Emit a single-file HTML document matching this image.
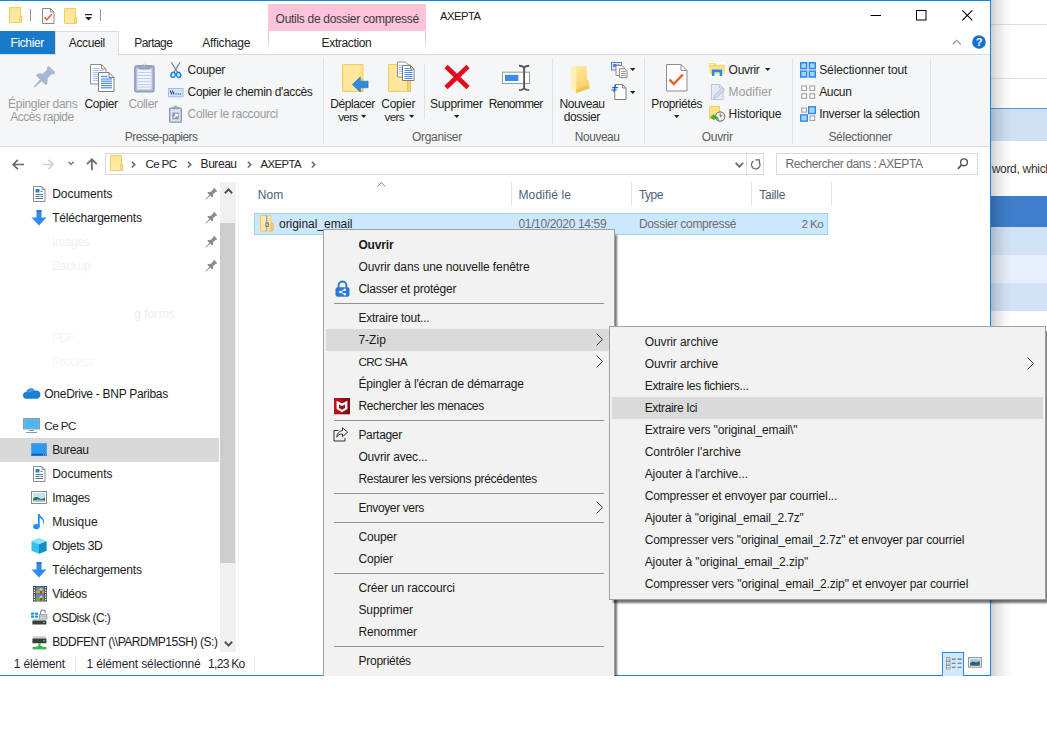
<!DOCTYPE html>
<html><head><meta charset="utf-8"><title>AXEPTA</title>
<style>
html,body{margin:0;padding:0;background:#fff;}
body{width:1047px;height:752px;position:relative;overflow:hidden;font-family:"Liberation Sans",sans-serif;font-size:12px;}
.a{position:absolute;}
.t{position:absolute;white-space:pre;line-height:16px;font-family:"Liberation Sans",sans-serif;}
svg{position:absolute;overflow:visible;}
.gs{position:absolute;top:58px;height:86px;width:1px;background:#e2e3e4;}
.cs{position:absolute;top:182px;height:24px;width:1px;background:#e5e5e5;}
.ms{position:absolute;height:1px;background:#919191;}
.hl{position:absolute;background:#dadada;}

</style></head>
<body>
<!-- right-hand background app -->
<div class="a" style="left:990px;top:0;width:57px;height:676px;background:#fff;"></div>
<div class="a" style="left:991px;top:24px;width:56px;height:1px;background:#e1e1e1;"></div>
<div class="a" style="left:991px;top:78px;width:56px;height:1px;background:#e1e1e1;"></div>
<div class="a" style="left:991px;top:108px;width:56px;height:33px;background:#cfe0f4;border-top:1px solid #5b9bd5;box-sizing:border-box;"></div>
<div class="a" style="left:991px;top:196px;width:56px;height:31px;background:#3d7fcb;"></div>
<div class="a" style="left:991px;top:227px;width:56px;height:28px;background:#d3e2f6;"></div>
<div class="a" style="left:991px;top:255px;width:56px;height:28px;background:#e7f0fb;"></div>
<div class="a" style="left:991px;top:283px;width:56px;height:28px;background:#d3e2f6;"></div>
<div class="a" style="left:991px;top:0;width:22px;height:676px;background:linear-gradient(90deg,rgba(0,0,0,.2),rgba(0,0,0,.1) 30%,rgba(0,0,0,.03) 65%,rgba(0,0,0,0));"></div>

<!-- explorer window -->
<div class="a" style="left:0;top:0;width:991px;height:676px;background:#fff;box-sizing:border-box;border-top:1px solid #1883d7;border-right:1px solid #1883d7;border-bottom:1px solid #1883d7;"></div>
<!-- title bar -->
<div class="a" style="left:268px;top:4px;width:158px;height:27px;background:#fcc3da;"></div>
<div class="a" style="left:268px;top:31px;width:1px;height:19px;background:linear-gradient(#c4c4c4,#dcdcdc 60%,rgba(230,230,230,0));"></div><div class="a" style="left:425px;top:31px;width:1px;height:19px;background:linear-gradient(#c4c4c4,#dcdcdc 60%,rgba(230,230,230,0));"></div>
<div class="a" style="left:30px;top:9px;width:1px;height:12px;background:#959595;"></div>
<div class="a" style="left:100px;top:9px;width:1px;height:12px;background:#959595;"></div>
<svg style="left:9px;top:7px" width="14" height="16" viewBox="0 0 14 16"><defs><linearGradient id="fsg10" x1="0" y1="0" x2="0" y2="1"><stop offset="0" stop-color="#ffe493"/><stop offset="1" stop-color="#ffecaa"/></linearGradient></defs><path d="M0.500 0.500h11v15h-11z" fill="url(#fsg10)" stroke="#f3cf62"/><path d="M10.700 9.500h2v6h-2z" fill="#ffe89c" stroke="#eec759"/></svg>
<svg style="left:42px;top:8px" width="13" height="16" viewBox="0 0 13 16"><path d="M0.500 0.500h8l3.500 3.500v11.500h-11.500z" fill="#f8f9fb" stroke="#8a8a8a"/><path d="M8.500 0.500v3.500h3.500" fill="none" stroke="#8a8a8a"/><path d="M2.500 9.300l2.300 2.400l5-5.400" fill="none" stroke="#f15a22" stroke-width="1.500"/></svg>
<svg style="left:64px;top:8px" width="14" height="16" viewBox="0 0 14 16"><defs><linearGradient id="fsg11" x1="0" y1="0" x2="0" y2="1"><stop offset="0" stop-color="#ffe493"/><stop offset="1" stop-color="#ffecaa"/></linearGradient></defs><path d="M0.500 0.500h11v15h-11z" fill="url(#fsg11)" stroke="#f3cf62"/><path d="M10.700 9.500h2v6h-2z" fill="#ffe89c" stroke="#eec759"/></svg>
<svg style="left:85px;top:13.6px" width="8" height="8" viewBox="0 0 8 8"><rect x="0" y="0" width="7" height="1.2" fill="#222"/><path d="M0 3h7l-3.5 3.5z" fill="#222"/></svg>
<svg style="left:870px;top:10px" width="12" height="12" viewBox="0 0 12 12"><path d="M0.5 5.5h10.5" stroke="#000" stroke-width="1" fill="none"/></svg><svg style="left:916px;top:10px" width="12" height="12" viewBox="0 0 12 12"><rect x="0.5" y="0.5" width="9.5" height="9.5" stroke="#000" stroke-width="1" fill="none"/></svg><svg style="left:962px;top:10px" width="12" height="12" viewBox="0 0 12 12"><path d="M0.3 0.3l10 10M10.3 0.3l-10 10" stroke="#000" stroke-width="1.1" fill="none"/></svg><svg style="left:952px;top:38px" width="10" height="8" viewBox="0 0 10 8"><path d="M0.7 6.3l4-4l4 4" stroke="#9a9a9a" stroke-width="1.3" fill="none"/></svg><svg style="left:972px;top:35px" width="14" height="14" viewBox="0 0 14 14"><circle cx="7" cy="7" r="6.8" fill="#1272cf"/><text x="7" y="11" font-family="Liberation Sans" font-weight="bold" font-size="11" fill="#fff" text-anchor="middle">?</text></svg>
<!-- ribbon tabs -->
<div class="a" style="left:0;top:31px;width:55px;height:23px;background:#1979ca;"></div>
<div class="a" style="left:0;top:54px;width:990px;height:93px;background:#f5f6f7;border-top:1px solid #dadbdc;border-bottom:1px solid #dadbdc;box-sizing:border-box;"></div>
<div class="a" style="left:55px;top:31px;width:64px;height:24px;background:#f5f6f7;border:1px solid #dadbdc;border-bottom:none;box-sizing:border-box;"></div>
<!-- ribbon group separators -->
<div class="gs" style="left:323px;"></div>
<div class="gs" style="left:552px;"></div>
<div class="gs" style="left:644px;"></div>
<div class="gs" style="left:792px;"></div>
<div class="gs" style="left:930px;"></div>
<div class="a" style="left:424px;top:64px;width:1px;height:55px;background:#e2e3e4;"></div>
<!-- ribbon icons -->
<svg style="left:33px;top:67px" width="21" height="22" viewBox="0 0 21 22"><g transform="translate(10.2,11) rotate(45) translate(0,-12.5)" fill="#a7b7cf"><rect x="-4.800" y="0" width="9.600" height="3.400" rx="1"/><rect x="-3.300" y="2.500" width="6.600" height="7.500"/><path d="M-3.300 9.500l-3.600 4v2.200h13.800v-2.200l-3.600-4z"/><path d="M-1.200 15.500h2.400l-0.600 9.800h-1.200z"/></g></svg>
<svg style="left:90px;top:63px" width="26" height="30" viewBox="0 0 26 30"><path d="M0.5 1.5h11l4.5 4.5v15h-15.5z" fill="#fff" stroke="#8c8c8c"/><path d="M11.5 1.5v4.5h4.5" fill="none" stroke="#8c8c8c"/><path d="M2.5 5.5H9.5" stroke="#a9c6f5" stroke-width="1"/><path d="M2.5 7.5H13.5" stroke="#a9c6f5" stroke-width="1"/><path d="M2.5 9.5H13.5" stroke="#a9c6f5" stroke-width="1"/><path d="M2.5 11.5H13.5" stroke="#a9c6f5" stroke-width="1"/><path d="M2.5 13.5H13.5" stroke="#a9c6f5" stroke-width="1"/><path d="M2.5 15.5H13.5" stroke="#a9c6f5" stroke-width="1"/><path d="M2.5 17.5H13.5" stroke="#a9c6f5" stroke-width="1"/><path d="M8.5 9.5h10.5l5 5v14h-15.5z" fill="#fff" stroke="#7e7e7e"/><path d="M19 9.5v5h5" fill="none" stroke="#7e7e7e"/><path d="M11 13.5H17.5" stroke="#4a8af0" stroke-width="1.2"/><path d="M11 16H22" stroke="#4a8af0" stroke-width="1.2"/><path d="M11 18.2H22" stroke="#4a8af0" stroke-width="1.2"/><path d="M11 20.4H22" stroke="#4a8af0" stroke-width="1.2"/><path d="M11 22.6H22" stroke="#4a8af0" stroke-width="1.2"/><path d="M11 24.8H22" stroke="#4a8af0" stroke-width="1.2"/></svg>
<svg style="left:134px;top:62px" width="21" height="31" viewBox="0 0 21 31"><rect x="0.800" y="4" width="19.200" height="25.800" rx="1.500" fill="#a9b7d1" stroke="#8797b8" stroke-width="1.300"/><rect x="3" y="7" width="14.800" height="20.600" fill="#eef2fa" stroke="#c2cce0" stroke-width="0.800"/><path d="M3.5 10.5H17.3" stroke="#c3cee4" stroke-width="1"/><path d="M3.5 13.5H17.3" stroke="#c3cee4" stroke-width="1"/><path d="M3.5 16.5H17.3" stroke="#c3cee4" stroke-width="1"/><path d="M3.5 19.5H17.3" stroke="#c3cee4" stroke-width="1"/><path d="M3.5 22.5H17.3" stroke="#c3cee4" stroke-width="1"/><path d="M3.5 25H17.3" stroke="#c3cee4" stroke-width="1"/><path d="M5.600 7v-3.300h2.900a2 2.200 0 0 1 3.800 0h2.900v3.300z" fill="#9aa9c6" stroke="#8797b8" stroke-width="0.800"/><circle cx="10.400" cy="2.600" r="0.900" fill="#eef2fa"/></svg>
<svg style="left:170px;top:62px" width="13" height="17" viewBox="0 0 13 17"><path d="M1.3 0.3l6.6 10.6M10.1 0.3l-6.6 10.6" stroke="#7c838b" stroke-width="1.2" fill="none"/><ellipse cx="3.1" cy="12.9" rx="2.1" ry="2.5" transform="rotate(25 3.1 12.9)" fill="#eaf4fd" stroke="#1b84d8" stroke-width="1.5"/><ellipse cx="8.6" cy="12.9" rx="2.1" ry="2.5" transform="rotate(-25 8.6 12.9)" fill="#eaf4fd" stroke="#1b84d8" stroke-width="1.5"/></svg>
<svg style="left:168px;top:88px" width="16" height="10" viewBox="0 0 16 10"><rect x="0.5" y="0.5" width="14.5" height="8.3" fill="#cfe4fc" stroke="#9cc3f0"/><path d="M2.2 2.6l1.6 3.8M4.4 2.6l1.6 3.8" stroke="#1c2f55" stroke-width="1.1" fill="none"/><path d="M7.4 6h1.2M9.6 6h1.2M11.8 6h1.2" stroke="#1c2f55" stroke-width="1.2"/></svg>
<svg style="left:169px;top:106px" width="13" height="17" viewBox="0 0 13 17"><rect x="0.7" y="2.2" width="11.6" height="14" rx="1" fill="#dfe4ee" stroke="#8493ae" stroke-width="1.3"/><path d="M3.7 2.8v-1.6h1.6a1.2 1.2 0 0 1 2.4 0h1.6v1.6z" fill="#aab4c8" stroke="#8493ae" stroke-width="0.7"/><rect x="3.3" y="6.5" width="6.4" height="6.8" fill="#8b98b3"/><path d="M4.6 12l3.3-3.3M5.7 8.2h2.6v2.6" stroke="#fff" stroke-width="1.1" fill="none"/></svg>
<svg style="left:342px;top:64px" width="27" height="29" viewBox="0 0 27 29"><path d="M0.5 0.5h20.5v27h-20.5z" fill="#ffe28a" stroke="#f0cf6a"/><path d="M2 2h15.5v24h-15.5z" fill="#ffe9a6" opacity="0.7"/><path d="M18 15h3v12.5h-3z" fill="#f3d273" stroke="#e3bd55" stroke-width="0.7"/><path d="M10.3 20.5l8-7.6v4.3h7.8v6.6h-7.8v4.3z" fill="#2f8ae0" stroke="#1c6fc4" stroke-width="0.6"/></svg>
<svg style="left:388px;top:61px" width="27" height="32" viewBox="0 0 27 32"><path d="M0.5 3.5h22v27h-22z" fill="#ffe28a" stroke="#f0cf6a"/><path d="M2 5h16.5v24h-16.5z" fill="#ffe9a6" opacity="0.7"/><path d="M19.5 18h3v12.5h-3z" fill="#f3d273" stroke="#e3bd55" stroke-width="0.7"/><path d="M9.5 1h8l3.5 3.5v11.5h-11.5z" fill="#fff" stroke="#8c8c8c"/><path d="M11 4.5H15" stroke="#9cbcf0" stroke-width="1"/><path d="M11 6.5H15" stroke="#9cbcf0" stroke-width="1"/><path d="M11 8.5H15" stroke="#9cbcf0" stroke-width="1"/><path d="M11 10.5H15" stroke="#9cbcf0" stroke-width="1"/><path d="M11 12.5H15" stroke="#9cbcf0" stroke-width="1"/><path d="M14.5 4.5h8l3.5 3.5v11.5h-11.5z" fill="#fff" stroke="#7e7e7e"/><path d="M22.5 4.5v3.5h3.5" fill="none" stroke="#7e7e7e"/><path d="M16.5 7.5H21.5" stroke="#4a8af0" stroke-width="1"/><path d="M16.5 9.5H24.5" stroke="#4a8af0" stroke-width="1"/><path d="M16.5 11.5H24.5" stroke="#4a8af0" stroke-width="1"/><path d="M16.5 13.5H24.5" stroke="#4a8af0" stroke-width="1"/><path d="M16.5 15.5H24.5" stroke="#4a8af0" stroke-width="1"/><path d="M16.5 17.5H24.5" stroke="#4a8af0" stroke-width="1"/></svg>
<svg style="left:444px;top:65px" width="26" height="25" viewBox="0 0 26 25"><path d="M2 1.5l22 21M24 1.5l-22 21" stroke="#e00b1c" stroke-width="4.7" fill="none"/></svg>
<svg style="left:502px;top:64px" width="28" height="27" viewBox="0 0 28 27"><rect x="0.5" y="8.2" width="27" height="11.3" fill="#fff" stroke="#9a9a9a"/><rect x="3" y="10.8" width="13.4" height="6.2" fill="#3b8ee6"/><rect x="17.8" y="1" width="8" height="25.5" fill="#f5f6f7" opacity="0.0"/><path d="M17 1.7c2.7 0 4.5 0.6 5.1 2.4c0.6-1.8 2.4-2.4 5.1-2.4M17 26.1c2.7 0 4.5-0.6 5.1-2.4c0.6 1.8 2.4 2.4 5.1 2.4M22.1 4v20" stroke="#595959" stroke-width="1.9" fill="none"/></svg>
<svg style="left:570px;top:65px" width="20" height="29" viewBox="0 0 20 29"><defs><linearGradient id="nfg" x1="0" y1="0" x2="0.3" y2="1"><stop offset="0" stop-color="#ffe9a2"/><stop offset="1" stop-color="#f8cf60"/></linearGradient></defs><path d="M0.6 2.4l5.6-1.3v26.8l-5.2-2.8z" fill="#ffefb8"/><path d="M6.2 1.1h10.6v12.7l2.4 3.2v6.4l-13 4.5z" fill="url(#nfg)"/><path d="M6.2 24.5l13-4.2v3.1l-13 4.5z" fill="#eabf4e" opacity="0.8"/></svg>
<svg style="left:611px;top:62px" width="17" height="17" viewBox="0 0 17 17"><rect x="0.5" y="0.5" width="10" height="7.5" fill="#dbe9fb" stroke="#4f86cf"/><rect x="2" y="2" width="3.5" height="3" fill="#4f86cf"/><path d="M6.5 3h2" stroke="#c0504d"/><path d="M5 3.5h6l2.2 2.2v7.8h-8.2z" fill="#fff" stroke="#7c7c7c" stroke-width="0.9"/><path d="M8.5 6.8h5.5l2 2v6.8h-7.5z" fill="#fff" stroke="#7c7c7c" stroke-width="0.9"/><path d="M10 9.6H15" stroke="#d07a6a" stroke-width="0.9"/><path d="M10 13.6H15" stroke="#d07a6a" stroke-width="0.9"/><path d="M10 11.6H15" stroke="#5d8fd1" stroke-width="0.9"/></svg>
<svg style="left:611px;top:84px" width="17" height="17" viewBox="0 0 17 17"><path d="M3.8 0.5h7.7l3.5 3.5v11.5h-11.2z" fill="#fff" stroke="#7c7c7c"/><path d="M11.5 0.5v3.5h3.5" fill="none" stroke="#7c7c7c"/><path d="M1.2 3.6h6M0.3 6h5.6" stroke="#1d64c8" stroke-width="1.1"/><path d="M4.6 1.2l-1.8 7" stroke="#1d64c8" stroke-width="1.1"/></svg>
<svg style="left:666px;top:64px" width="22" height="28" viewBox="0 0 22 28"><path d="M0.5 0.5h14.5l6 6v20.5h-20.5z" fill="#fff" stroke="#8c8c8c"/><path d="M15 0.5v6h6" fill="none" stroke="#8c8c8c"/><path d="M3.5 15.5l4.2 4.6l9.2-9.6" fill="none" stroke="#f15a22" stroke-width="2.4"/></svg>
<svg style="left:709px;top:62px" width="17" height="16" viewBox="0 0 17 16"><rect x="0" y="0" width="16.5" height="15.5" fill="#fff"/><path d="M0.3 1h5.8l1.6 1.8h8.3v8.8h-15.7z" fill="#ffd766"/><path d="M1.3 2.2h3.4" stroke="#fff" stroke-width="0.9"/><path d="M0.3 4.3h15.7v7.3h-15.7z" fill="#ffe08a"/><path d="M2.8 14v-6.6h10.4v6.6h-2.6v-3.8h-5.2v3.8z" fill="#1e90e8"/></svg>
<svg style="left:710px;top:84px" width="16" height="16" viewBox="0 0 16 16"><path d="M1.500 0.500h8l3.500 3.500v11.500h-11.500z" fill="#e4eaf6" stroke="#b9c4da"/><path d="M9.500 0.500v3.500h3.500" fill="none" stroke="#b9c4da"/><path d="M3.600 14.600l0.800-3.200l8.200-7.600l2 2.200l-8.200 7.600z" fill="#d3dcee" stroke="#b3bfd8" stroke-width="0.900"/></svg>
<svg style="left:709px;top:106px" width="17" height="16" viewBox="0 0 17 16"><path d="M0.5 0.5h10v12h-10z" fill="#ffe28a" stroke="#f0cf6a"/><path d="M9 6.5h1.5v6h-1.5z" fill="#f3d273"/><circle cx="11.2" cy="10.5" r="4.6" fill="#f1f1f1" stroke="#7a7a7a" stroke-width="1.1"/><path d="M11.2 7.6v3.1l2-1.5" stroke="#555" stroke-width="0.9" fill="none"/><path d="M1.6 11.2l3.6-3v1.9c2.4 0 3.9 1.2 4.3 3.8c-1-1.4-2.4-1.7-4.3-1.7v1.9z" fill="#3fb83a" stroke="#2a8a28" stroke-width="0.5"/></svg>
<svg style="left:800px;top:62px" width="16" height="16" viewBox="0 0 16 16"><rect x="0.75" y="0.75" width="5.90" height="5.90" fill="#a9d3f9" stroke="#2b8ae6" stroke-width="1.5"/><rect x="9.35" y="0.75" width="5.90" height="5.90" fill="#a9d3f9" stroke="#2b8ae6" stroke-width="1.5"/><rect x="0.75" y="9.15" width="5.90" height="5.90" fill="#a9d3f9" stroke="#2b8ae6" stroke-width="1.5"/><rect x="9.35" y="9.15" width="5.90" height="5.90" fill="#a9d3f9" stroke="#2b8ae6" stroke-width="1.5"/></svg>
<svg style="left:800px;top:85px" width="16" height="16" viewBox="0 0 16 16"><rect x="1.70" y="1.00" width="4.80" height="4.40" fill="#fdfdfd" stroke="#9a9a9a" stroke-width="1"/><rect x="9.90" y="1.00" width="4.80" height="4.40" fill="#fdfdfd" stroke="#9a9a9a" stroke-width="1"/><rect x="1.70" y="8.80" width="4.80" height="4.50" fill="#fdfdfd" stroke="#9a9a9a" stroke-width="1"/><rect x="9.90" y="8.80" width="4.80" height="4.50" fill="#fdfdfd" stroke="#9a9a9a" stroke-width="1"/></svg>
<svg style="left:800px;top:107px" width="16" height="16" viewBox="0 0 16 16"><rect x="1.70" y="1.10" width="4.80" height="4.00" fill="#fdfdfd" stroke="#9a9a9a" stroke-width="1"/><rect x="8.70" y="-0.20" width="6.60" height="6.70" fill="#a9d3f9" stroke="#2b8ae6" stroke-width="1.4"/><rect x="0.70" y="7.90" width="6.60" height="6.20" fill="#a9d3f9" stroke="#2b8ae6" stroke-width="1.4"/><rect x="9.90" y="8.90" width="4.80" height="4.50" fill="#fdfdfd" stroke="#9a9a9a" stroke-width="1"/></svg>
<svg style="left:360.5px;top:115px" width="6" height="4" viewBox="0 0 6 4"><path d="M0 0h5.4l-2.7 3z" fill="#222"/></svg><svg style="left:408.5px;top:115px" width="6" height="4" viewBox="0 0 6 4"><path d="M0 0h5.4l-2.7 3z" fill="#222"/></svg><svg style="left:453.5px;top:115px" width="6" height="4" viewBox="0 0 6 4"><path d="M0 0h5.4l-2.7 3z" fill="#222"/></svg><svg style="left:673.5px;top:115px" width="6" height="4" viewBox="0 0 6 4"><path d="M0 0h5.4l-2.7 3z" fill="#222"/></svg><svg style="left:765px;top:68px" width="6" height="4" viewBox="0 0 6 4"><path d="M0 0h5.4l-2.7 3z" fill="#222"/></svg><svg style="left:629.5px;top:68px" width="6" height="4" viewBox="0 0 6 4"><path d="M0 0h5.4l-2.7 3z" fill="#222"/></svg><svg style="left:629.5px;top:90.5px" width="6" height="4" viewBox="0 0 6 4"><path d="M0 0h5.4l-2.7 3z" fill="#222"/></svg>
<!-- address bar -->
<div class="a" style="left:105px;top:153px;width:659px;height:22px;border:1px solid #d9d9d9;box-sizing:border-box;background:#fff;"></div>
<div class="a" style="left:746px;top:154px;width:1px;height:20px;background:#d9d9d9;"></div>
<div class="a" style="left:776px;top:153px;width:202px;height:22px;border:1px solid #d9d9d9;box-sizing:border-box;background:#fff;"></div>
<svg style="left:12px;top:158.5px" width="13" height="11" viewBox="0 0 13 11"><path d="M12 5.500H1.300M5.800 0.900L1.200 5.500l4.600 4.600" stroke="#6a6a6a" stroke-width="1.700" fill="none"/></svg><svg style="left:42px;top:158.5px" width="13" height="11" viewBox="0 0 13 11"><path d="M0.300 5.500H11M6.500 0.900L11.100 5.500l-4.600 4.600" stroke="#d2d2d2" stroke-width="1.600" fill="none"/></svg><svg style="left:68px;top:161px" width="7" height="5" viewBox="0 0 7 5"><path d="M0.600 0.800l2.500 2.600l2.500-2.600" stroke="#777" stroke-width="1.400" fill="none"/></svg><svg style="left:86px;top:157.5px" width="12" height="13" viewBox="0 0 12 13"><path d="M5.900 12.300V1.400M1 6.200L5.900 1.300l4.900 4.900" stroke="#6a6a6a" stroke-width="1.700" fill="none"/></svg>
<svg style="left:110px;top:155px" width="14" height="16" viewBox="0 0 14 16"><defs><linearGradient id="fsg12" x1="0" y1="0" x2="0" y2="1"><stop offset="0" stop-color="#ffe493"/><stop offset="1" stop-color="#ffecaa"/></linearGradient></defs><path d="M0.500 0.500h11v15h-11z" fill="url(#fsg12)" stroke="#f3cf62"/><path d="M10.700 9.500h2v6h-2z" fill="#ffe89c" stroke="#eec759"/></svg>
<svg style="left:131px;top:161.29999999999998px" width="6" height="8" viewBox="0 0 6 8"><path d="M0.800 0.700l3 2.900l-3 2.900" stroke="#666" stroke-width="1.500" fill="none"/></svg><svg style="left:186.6px;top:161.29999999999998px" width="6" height="8" viewBox="0 0 6 8"><path d="M0.800 0.700l3 2.900l-3 2.900" stroke="#666" stroke-width="1.500" fill="none"/></svg><svg style="left:246.6px;top:161.29999999999998px" width="6" height="8" viewBox="0 0 6 8"><path d="M0.800 0.700l3 2.900l-3 2.900" stroke="#666" stroke-width="1.500" fill="none"/></svg><svg style="left:311.3px;top:161.29999999999998px" width="6" height="8" viewBox="0 0 6 8"><path d="M0.800 0.700l3 2.900l-3 2.900" stroke="#666" stroke-width="1.500" fill="none"/></svg>
<svg style="left:734.5px;top:162px" width="10" height="7" viewBox="0 0 10 7"><path d="M0.7 0.9l3.7 3.9l3.7-3.9" stroke="#6a6a6a" stroke-width="1.8" fill="none"/></svg><svg style="left:750px;top:157px" width="12" height="14" viewBox="0 0 12 14"><path d="M3.5 4.1A4.2 4.2 0 1 0 9.4 5.6" stroke="#707070" stroke-width="1.4" fill="none"/><path d="M5.2 2.9H9.4V6.6" stroke="#707070" stroke-width="1.4" fill="none"/></svg><svg style="left:957px;top:158px" width="12" height="12" viewBox="0 0 12 12"><circle cx="7" cy="4.3" r="3.4" stroke="#555" stroke-width="1.4" fill="none"/><path d="M4.6 6.8L0.8 10.8" stroke="#555" stroke-width="1.7"/></svg>
<!-- nav pane -->
<div class="a" style="left:0;top:438px;width:219px;height:24px;background:#d9d9d9;"></div>
<div class="a" style="left:220px;top:182px;width:16px;height:470px;background:#f0f0f0;"></div><div class="a" style="left:238px;top:182px;width:1px;height:470px;background:#f4f4f4;"></div>
<div class="a" style="left:220px;top:223px;width:15px;height:340px;background:#cdcdcd;"></div>
<svg style="left:223.5px;top:188px" width="9" height="6" viewBox="0 0 9 6"><path d="M0.900 5.200l3.600-3.800l3.600 3.800" stroke="#505050" stroke-width="2" fill="none"/></svg><svg style="left:223.5px;top:641px" width="9" height="6" viewBox="0 0 9 6"><path d="M0.900 0.800l3.600 3.800l3.600-3.800" stroke="#505050" stroke-width="2" fill="none"/></svg>
<svg style="left:33px;top:186px" width="13" height="16" viewBox="0 0 13 16"><path d="M0.5 0.5h8.5l3 3v12h-11.5z" fill="#fff" stroke="#8a8a8a"/><path d="M9 0.5v3h3" fill="none" stroke="#8a8a8a"/><rect x="2.5" y="3" width="4" height="3.5" fill="#2a7ad8"/><path d="M7.5 5.5h2M2.5 8.5h7.5M2.5 10.5h4M7.5 10.5h2.5M2.5 12.5h7.5" stroke="#4b6f9e" stroke-width="1"/><path d="M2.5 10.5h3" stroke="#3aa935" stroke-width="1"/></svg>
<svg style="left:31px;top:210px" width="16" height="16" viewBox="0 0 16 16"><path d="M5.5 0h5v7.5h5l-7.5 8l-7.5-8h5z" fill="#2b8be6"/><path d="M5.5 0h5v2h-5z" fill="#1d6fc8" opacity="0.6"/></svg>
<svg style="left:205px;top:189px" width="11" height="11" viewBox="0 0 11 11"><g transform="translate(5.6,5.4) rotate(45) translate(0,-7)" fill="#8a8a8a"><rect x="-2.3" y="0" width="4.6" height="1.6" rx="0.4"/><rect x="-1.6" y="1.2" width="3.2" height="4"/><path d="M-1.6 5l-1.8 2v1.1h6.8v-1.1l-1.8-2z"/><path d="M-0.55 8h1.1l-0.2 6h-0.7z"/></g></svg><svg style="left:205px;top:213px" width="11" height="11" viewBox="0 0 11 11"><g transform="translate(5.6,5.4) rotate(45) translate(0,-7)" fill="#8a8a8a"><rect x="-2.3" y="0" width="4.6" height="1.6" rx="0.4"/><rect x="-1.6" y="1.2" width="3.2" height="4"/><path d="M-1.6 5l-1.8 2v1.1h6.8v-1.1l-1.8-2z"/><path d="M-0.55 8h1.1l-0.2 6h-0.7z"/></g></svg><svg style="left:205px;top:237px" width="11" height="11" viewBox="0 0 11 11"><g transform="translate(5.6,5.4) rotate(45) translate(0,-7)" fill="#8a8a8a"><rect x="-2.3" y="0" width="4.6" height="1.6" rx="0.4"/><rect x="-1.6" y="1.2" width="3.2" height="4"/><path d="M-1.6 5l-1.8 2v1.1h6.8v-1.1l-1.8-2z"/><path d="M-0.55 8h1.1l-0.2 6h-0.7z"/></g></svg><svg style="left:205px;top:261px" width="11" height="11" viewBox="0 0 11 11"><g transform="translate(5.6,5.4) rotate(45) translate(0,-7)" fill="#8a8a8a"><rect x="-2.3" y="0" width="4.6" height="1.6" rx="0.4"/><rect x="-1.6" y="1.2" width="3.2" height="4"/><path d="M-1.6 5l-1.8 2v1.1h6.8v-1.1l-1.8-2z"/><path d="M-0.55 8h1.1l-0.2 6h-0.7z"/></g></svg>
<svg style="left:23px;top:388px" width="17" height="11" viewBox="0 0 17 11"><path d="M3.6 10.8a3.4 3.4 0 0 1-0.3-6.8a4.6 4.6 0 0 1 8.5-1.3a3.3 3.3 0 0 1 1.3-0.2a4.1 4.1 0 0 1 0.4 8.3z" fill="#1b7fd6"/><path d="M3.3 4a4.6 4.6 0 0 1 8.5-1.3c-2 0.4-5.5 3-8.5 1.3z" fill="#3b9bea"/></svg>
<svg style="left:23px;top:418px" width="17" height="16" viewBox="0 0 17 16"><rect x="0.5" y="0.5" width="16" height="10.5" fill="#5fc4f5" stroke="#8b9aa8"/><rect x="1.5" y="1.5" width="14" height="8.5" fill="#4db7f0"/><path d="M6 12.5h5M3 14.5h11" stroke="#8b9aa8" stroke-width="1.2"/></svg>
<svg style="left:31px;top:443px" width="16" height="13" viewBox="0 0 16 13"><rect x="0.3" y="0.3" width="15.4" height="12.4" fill="#1e8ae6"/><rect x="1" y="1" width="14" height="9" fill="#2b9af0"/><path d="M0.3 11h15.4v1.7h-15.4z" fill="#0f62b8"/><path d="M12 11.8h1M14 11.8h1" stroke="#cfe6ff" stroke-width="0.8"/></svg>
<svg style="left:33px;top:466px" width="13" height="16" viewBox="0 0 13 16"><path d="M0.5 0.5h8.5l3 3v12h-11.5z" fill="#fff" stroke="#8a8a8a"/><path d="M9 0.5v3h3" fill="none" stroke="#8a8a8a"/><rect x="2.5" y="3" width="4" height="3.5" fill="#2a7ad8"/><path d="M7.5 5.5h2M2.5 8.5h7.5M2.5 10.5h4M7.5 10.5h2.5M2.5 12.5h7.5" stroke="#4b6f9e" stroke-width="1"/><path d="M2.5 10.5h3" stroke="#3aa935" stroke-width="1"/></svg>
<svg style="left:31px;top:491px" width="16" height="13" viewBox="0 0 16 13"><rect x="0.5" y="0.5" width="15" height="12" fill="#fff" stroke="#8a8a8a"/><rect x="2" y="2" width="12" height="9" fill="#bfe3fb"/><path d="M2 8c2-2.5 4-2.5 6-1s4 1 6-0.5v4.5h-12z" fill="#3d6b4f"/><path d="M2 9.5c3-1 8-1 12 0v1.5h-12z" fill="#9fc7e8"/></svg>
<svg style="left:33px;top:513px" width="13" height="18" viewBox="0 0 13 18"><ellipse cx="3.4" cy="13.6" rx="3.3" ry="2.7" fill="#1e90f0"/><path d="M5 1v12.8h1.7v-9c2.5 1 4 3.2 3.2 7.5c2.6-4.5 0.2-7.6-2.2-9.3c-0.6-0.5-0.9-1.2-1-2z" fill="#1e90f0"/></svg>
<svg style="left:31px;top:538px" width="16" height="16" viewBox="0 0 16 16"><path d="M8 0.3l7.5 3v9.4l-7.5 3l-7.5-3v-9.4z" fill="#36c1e8"/><path d="M8 6.3l7.5-3v9.4l-7.5 3z" fill="#0f8fc4"/><path d="M8 0.3l7.5 3l-7.5 3l-7.5-3z" fill="#8fe3f7"/></svg>
<svg style="left:31px;top:562px" width="16" height="16" viewBox="0 0 16 16"><path d="M5.5 0h5v7.5h5l-7.5 8l-7.5-8h5z" fill="#2b8be6"/><path d="M5.5 0h5v2h-5z" fill="#1d6fc8" opacity="0.6"/></svg>
<svg style="left:33px;top:586px" width="14" height="16" viewBox="0 0 14 16"><rect x="0" y="0" width="14" height="15.5" fill="#4a4a4a"/><path d="M1.3 1v14M12.7 1v14" stroke="#fff" stroke-width="1.2" stroke-dasharray="1.3 1.1"/><rect x="2.8" y="0.8" width="8.4" height="6.6" fill="#4c8fe0"/><rect x="2.8" y="8.2" width="8.4" height="6.6" fill="#4c8fe0"/><rect x="2.8" y="4.6" width="8.4" height="2.8" fill="#d8a23a"/><rect x="2.8" y="12" width="8.4" height="2.8" fill="#7aa845"/><circle cx="8" cy="3.6" r="1.6" fill="#f0c93a"/><circle cx="8" cy="11" r="1.6" fill="#f0c93a"/><rect x="7" y="4.8" width="2.2" height="2.4" fill="#a33"/><rect x="7" y="12.2" width="2.2" height="2.4" fill="#a33"/></svg>
<svg style="left:31px;top:609px" width="17" height="17" viewBox="0 0 17 17"><path d="M0 3.4h3.1v2.3h-3.1zM3.9 3.4h3.1v2.3h-3.1zM0 6.4h3.1v2.3h-3.1zM3.9 6.4h3.1v2.3h-3.1z" fill="#1e9bf0"/><path d="M9.6 5.8v-2.3a2.4 2.4 0 0 1 4.8 0v0.4" stroke="#8f8f8f" stroke-width="1.2" fill="none"/><rect x="8.3" y="5.6" width="7.6" height="4.4" fill="#dcdcdc" stroke="#8f8f8f" stroke-width="0.8"/><path d="M8.8 7.2h6.6" stroke="#7fb3e0" stroke-width="0.9"/><path d="M2.2 10h12.6l0.6 1.6h-13.8z" fill="#c9c9c9"/><rect x="1.4" y="11.4" width="14" height="4" rx="0.5" fill="#3b3b3b"/><rect x="12" y="12.8" width="1.8" height="1.1" fill="#4fe04a"/></svg>
<svg style="left:31px;top:635px" width="17" height="16" viewBox="0 0 17 16"><path d="M2.2 1.3h12.6l0.7 2.5h-14z" fill="#cfcfcf"/><rect x="1.4" y="3.6" width="14" height="4.6" rx="0.5" fill="#3b3b3b"/><rect x="12" y="5.2" width="1.8" height="1.1" fill="#4fe04a"/><rect x="7.4" y="8.2" width="2.2" height="3.6" fill="#3fb84a"/><path d="M5.6 11.2h5.8v1.2h-5.8z" fill="#2f9d3a"/><rect x="1.6" y="12" width="13.8" height="2.4" fill="#3fb84a"/></svg>
<!-- file list -->
<div class="cs" style="left:511px;"></div><div class="cs" style="left:631px;"></div><div class="cs" style="left:751px;"></div><div class="cs" style="left:831px;"></div>
<div class="a" style="left:254px;top:213px;width:574px;height:22px;background:#cce8ff;border:1px solid #99d1ff;box-sizing:border-box;"></div>
<svg style="left:376.5px;top:182px" width="9" height="5" viewBox="0 0 9 5"><path d="M0.500 4.300l3.800-3.600l3.800 3.600" stroke="#777" stroke-width="1" fill="none"/></svg>
<svg style="left:260px;top:215px" width="14" height="17" viewBox="0 0 14 17"><path d="M0.500 0.500h10.500v15.500h-10.500z" fill="#ffe9a0" stroke="#ecc95f"/><path d="M11 8.500h2v7.500h-2z" fill="#f5d678" stroke="#e3bd55"/><rect x="5.600" y="0.300" width="3" height="15" fill="#e8e8e8"/><path d="M6.400 0.500v15" stroke="#666" stroke-width="1" stroke-dasharray="1 1"/><path d="M7.800 1v14" stroke="#9a9a9a" stroke-width="1" stroke-dasharray="1 1"/><rect x="5.900" y="8" width="2.400" height="3.400" fill="#cfcfcf" stroke="#555" stroke-width="0.700"/></svg>
<!-- status bar -->
<div class="a" style="left:75px;top:656px;width:1px;height:15px;background:#eaeaea;"></div>
<div class="a" style="left:254px;top:656px;width:1px;height:15px;background:#eaeaea;"></div>
<div class="a" style="left:942px;top:652px;width:22px;height:24px;background:#cfe8fb;border:1px solid #2b8be0;border-bottom:none;box-sizing:border-box;"></div><svg style="left:946px;top:657px" width="16" height="13" viewBox="0 0 16 13"><rect x="0.5" y="0.4" width="3.4" height="3.4" fill="#fff" stroke="#8a8a8a" stroke-width="0.8"/><rect x="1.7" y="1.6" width="1" height="1" fill="#3a7d3a"/><path d="M5.8 2.1h3.8M11.6 2.1h4" stroke="#6d6d6d" stroke-width="1.1"/><rect x="0.5" y="4.5" width="3.4" height="3.4" fill="#fff" stroke="#8a8a8a" stroke-width="0.8"/><rect x="1.7" y="5.7" width="1" height="1" fill="#3b78d8"/><path d="M5.8 6.2h3.8M11.6 6.2h4" stroke="#6d6d6d" stroke-width="1.1"/><rect x="0.5" y="8.6" width="3.4" height="3.4" fill="#fff" stroke="#8a8a8a" stroke-width="0.8"/><rect x="1.7" y="9.799999999999999" width="1" height="1" fill="#d83b2b"/><path d="M5.8 10.299999999999999h3.8M11.6 10.299999999999999h4" stroke="#6d6d6d" stroke-width="1.1"/></svg><svg style="left:968px;top:657px" width="14" height="11" viewBox="0 0 14 11"><rect x="0.6" y="0.6" width="12.8" height="9.6" fill="#fff" stroke="#9a9a9a" stroke-width="1.2"/><rect x="2.2" y="2.2" width="9.6" height="6.4" fill="#8ec8f5"/><path d="M2.2 6.2c2-2 3.5-1.8 5-1s3 0 4.600-1.4v4.8h-9.6z" fill="#2f5e4a"/><path d="M2.200 7.600h9.600v1h-9.600z" fill="#3d6ea0"/></svg>
<span class="t" id="t0" style="left:275.6px;top:11px;color:#3c3c3c;font-size:12px;letter-spacing:-0.300px;">Outils de dossier compressé</span>
<span class="t" id="t1" style="left:439.9px;top:8px;color:#1a1a1a;font-size:11.3px;letter-spacing:-0.508px;">AXEPTA</span>
<span class="t" id="t2" style="left:10.5px;top:35px;color:#fff;font-size:12px;letter-spacing:-0.374px;">Fichier</span>
<span class="t" id="t3" style="left:68.8px;top:35px;color:#242424;font-size:12px;letter-spacing:-0.370px;">Accueil</span>
<span class="t" id="t4" style="left:134.3px;top:35px;color:#242424;font-size:12px;letter-spacing:-0.576px;">Partage</span>
<span class="t" id="t5" style="left:202.3px;top:35px;color:#242424;font-size:12px;letter-spacing:-0.203px;">Affichage</span>
<span class="t" id="t6" style="left:321.6px;top:35px;color:#242424;font-size:12px;letter-spacing:-0.356px;">Extraction</span>
<span class="t" id="t7" style="left:8.1px;top:96px;color:#9b9b9b;font-size:12px;letter-spacing:-0.315px;">Épingler dans</span>
<span class="t" id="t8" style="left:10.3px;top:109px;color:#9b9b9b;font-size:12px;letter-spacing:-0.506px;">Accès rapide</span>
<span class="t" id="t9" style="left:84.4px;top:96px;color:#242424;font-size:12px;letter-spacing:-0.343px;">Copier</span>
<span class="t" id="t10" style="left:128.4px;top:96px;color:#9b9b9b;font-size:12px;letter-spacing:-0.341px;">Coller</span>
<span class="t" id="t11" style="left:187.6px;top:62px;color:#242424;font-size:12px;letter-spacing:-0.343px;">Couper</span>
<span class="t" id="t12" style="left:187.6px;top:84px;color:#242424;font-size:12px;letter-spacing:-0.366px;">Copier le chemin d&#x27;accès</span>
<span class="t" id="t13" style="left:187.6px;top:106px;color:#9b9b9b;font-size:12px;letter-spacing:-0.307px;">Coller le raccourci</span>
<span class="t" id="t14" style="left:124.8px;top:129px;color:#5c5c5c;font-size:12px;letter-spacing:-0.579px;">Presse-papiers</span>
<span class="t" id="t15" style="left:330.3px;top:96px;color:#242424;font-size:12px;letter-spacing:-0.454px;">Déplacer</span>
<span class="t" id="t16" style="left:338.2px;top:109px;color:#242424;font-size:11.65px;letter-spacing:-0.675px;">vers</span>
<span class="t" id="t17" style="left:381.2px;top:96px;color:#242424;font-size:12px;letter-spacing:-0.227px;">Copier</span>
<span class="t" id="t18" style="left:384.5px;top:109px;color:#242424;font-size:11.65px;letter-spacing:-0.675px;">vers</span>
<span class="t" id="t19" style="left:430.0px;top:96px;color:#242424;font-size:12px;letter-spacing:-0.295px;">Supprimer</span>
<span class="t" id="t20" style="left:488.7px;top:96px;color:#242424;font-size:12px;letter-spacing:-0.682px;">Renommer</span>
<span class="t" id="t21" style="left:412.0px;top:129px;color:#5c5c5c;font-size:12px;letter-spacing:-0.310px;">Organiser</span>
<span class="t" id="t22" style="left:559.4px;top:96px;color:#242424;font-size:12px;letter-spacing:-0.407px;">Nouveau</span>
<span class="t" id="t23" style="left:563.7px;top:109px;color:#242424;font-size:12px;letter-spacing:-0.341px;">dossier</span>
<span class="t" id="t24" style="left:574.8px;top:129px;color:#5c5c5c;font-size:12px;letter-spacing:-0.478px;">Nouveau</span>
<span class="t" id="t25" style="left:651.3px;top:96px;color:#242424;font-size:12px;letter-spacing:-0.380px;">Propriétés</span>
<span class="t" id="t26" style="left:728.6px;top:62px;color:#242424;font-size:12px;letter-spacing:-0.279px;">Ouvrir</span>
<span class="t" id="t27" style="left:728.6px;top:84px;color:#9b9b9b;font-size:12px;letter-spacing:0.089px;">Modifier</span>
<span class="t" id="t28" style="left:728.6px;top:106px;color:#242424;font-size:12px;letter-spacing:-0.123px;">Historique</span>
<span class="t" id="t29" style="left:701.7px;top:129px;color:#5c5c5c;font-size:12px;letter-spacing:-0.279px;">Ouvrir</span>
<span class="t" id="t30" style="left:819.2px;top:62px;color:#242424;font-size:12px;letter-spacing:-0.115px;">Sélectionner tout</span>
<span class="t" id="t31" style="left:819.2px;top:84px;color:#242424;font-size:12px;letter-spacing:-0.346px;">Aucun</span>
<span class="t" id="t32" style="left:819.2px;top:106px;color:#242424;font-size:12px;letter-spacing:-0.296px;">Inverser la sélection</span>
<span class="t" id="t33" style="left:828.4px;top:129px;color:#5c5c5c;font-size:12px;letter-spacing:-0.285px;">Sélectionner</span>
<span class="t" id="t34" style="left:145.5px;top:156px;color:#242424;font-size:11.65px;letter-spacing:-0.679px;">Ce PC</span>
<span class="t" id="t35" style="left:200.6px;top:156px;color:#242424;font-size:12px;letter-spacing:-0.451px;">Bureau</span>
<span class="t" id="t36" style="left:260.4px;top:156px;color:#242424;font-size:11.3px;letter-spacing:-0.525px;">AXEPTA</span>
<span class="t" id="t37" style="left:785.5px;top:156px;color:#6d6d6d;font-size:12px;letter-spacing:-0.424px;">Rechercher dans : AXEPTA</span>
<span class="t" id="t38" style="left:52.2px;top:186px;color:#1a1a1a;font-size:12px;letter-spacing:-0.045px;">Documents</span>
<span class="t" id="t39" style="left:52.2px;top:210px;color:#1a1a1a;font-size:12px;letter-spacing:-0.215px;">Téléchargements</span>
<span class="t" id="t40" style="left:44.3px;top:386px;color:#1a1a1a;font-size:12px;letter-spacing:-0.279px;">OneDrive - BNP Paribas</span>
<span class="t" id="t41" style="left:44.3px;top:418px;color:#1a1a1a;font-size:11.65px;letter-spacing:-0.559px;">Ce PC</span>
<span class="t" id="t42" style="left:52.2px;top:442px;color:#1a1a1a;font-size:12px;letter-spacing:-0.401px;">Bureau</span>
<span class="t" id="t43" style="left:52.2px;top:466px;color:#1a1a1a;font-size:12px;letter-spacing:-0.045px;">Documents</span>
<span class="t" id="t44" style="left:52.2px;top:490px;color:#1a1a1a;font-size:12px;letter-spacing:-0.310px;">Images</span>
<span class="t" id="t45" style="left:52.2px;top:514px;color:#1a1a1a;font-size:12px;letter-spacing:0.006px;">Musique</span>
<span class="t" id="t46" style="left:52.2px;top:538px;color:#1a1a1a;font-size:12px;letter-spacing:-0.351px;">Objets 3D</span>
<span class="t" id="t47" style="left:52.2px;top:562px;color:#1a1a1a;font-size:12px;letter-spacing:-0.215px;">Téléchargements</span>
<span class="t" id="t48" style="left:52.2px;top:586px;color:#1a1a1a;font-size:12px;letter-spacing:-0.331px;">Vidéos</span>
<span class="t" id="t49" style="left:52.2px;top:610px;color:#1a1a1a;font-size:12px;letter-spacing:-0.536px;">OSDisk (C:)</span>
<span class="t" id="t50" style="left:52.2px;top:634px;color:#1a1a1a;font-size:12px;letter-spacing:-0.455px;">BDDFENT (\\PARDMP15SH) (S:)</span>
<span class="t" id="t51" style="left:134.0px;top:306px;color:#ececec;font-size:12px;letter-spacing:0.141px;">g forms</span>
<span class="t" id="t52" style="left:52.2px;top:234px;color:#f1f1f1;font-size:12px;letter-spacing:-0.310px;">Images</span>
<span class="t" id="t53" style="left:52.2px;top:258px;color:#f1f1f1;font-size:12px;letter-spacing:-0.339px;">Backup</span>
<span class="t" id="t54" style="left:52.2px;top:330px;color:#f6f6f6;font-size:12px;letter-spacing:-0.667px;">PDF</span>
<span class="t" id="t55" style="left:52.2px;top:354px;color:#f6f6f6;font-size:12px;letter-spacing:-0.194px;">Process</span>
<span class="t" id="t56" style="left:13.7px;top:656px;color:#1f2733;font-size:12px;letter-spacing:-0.156px;">1 élément</span>
<span class="t" id="t57" style="left:86.4px;top:656px;color:#1f2733;font-size:12px;letter-spacing:-0.121px;">1 élément sélectionné</span>
<span class="t" id="t58" style="left:208.0px;top:656px;color:#1f2733;font-size:12px;letter-spacing:-0.682px;">1,23 Ko</span>
<span class="t" id="t59" style="left:257.7px;top:187px;color:#4c607a;font-size:12px;letter-spacing:0.119px;">Nom</span>
<span class="t" id="t60" style="left:518.5px;top:187px;color:#4c607a;font-size:12px;letter-spacing:0.114px;">Modifié le</span>
<span class="t" id="t61" style="left:638.9px;top:187px;color:#4c607a;font-size:12px;letter-spacing:-0.479px;">Type</span>
<span class="t" id="t62" style="left:759.2px;top:187px;color:#4c607a;font-size:12px;letter-spacing:-0.227px;">Taille</span>
<span class="t" id="t63" style="left:279.0px;top:216px;color:#1a1a1a;font-size:12px;letter-spacing:-0.039px;">original_email</span>
<span class="t" id="t64" style="left:518.5px;top:216px;color:#6d6d6d;font-size:12px;letter-spacing:-0.358px;">01/10/2020 14:59</span>
<span class="t" id="t65" style="left:638.9px;top:216px;color:#6d6d6d;font-size:12px;letter-spacing:-0.318px;">Dossier compressé</span>
<span class="t" id="t66" style="left:801.5px;top:216px;color:#6d6d6d;font-size:11.65px;letter-spacing:-0.563px;">2 Ko</span>
<span class="t" id="t67" style="left:991.7px;top:161px;color:#333;font-size:12px;letter-spacing:-0.305px;">word, which</span>

<!-- context menu -->
<div class="a" style="left:323px;top:229px;width:292px;height:470px;background:#f2f2f2;border:1px solid #a0a0a0;box-sizing:border-box;box-shadow:3px 5px 2px -1px rgba(0,0,0,.55);"></div>
<div class="hl" style="left:326px;top:329px;width:283px;height:22px;"></div>
<div class="ms" style="left:334px;top:303px;width:270px;"></div>
<div class="ms" style="left:334px;top:420px;width:270px;"></div>
<div class="ms" style="left:334px;top:493px;width:270px;"></div>
<div class="ms" style="left:334px;top:522px;width:270px;"></div>
<div class="ms" style="left:334px;top:573px;width:270px;"></div>
<div class="ms" style="left:334px;top:646px;width:270px;"></div>
<svg style="left:596px;top:333.0px" width="8" height="13" viewBox="0 0 8 13"><path d="M0.6 0.6l5.9 5.9l-5.9 5.9" stroke="#333" stroke-width="1" fill="none"/></svg><svg style="left:596px;top:355.0px" width="8" height="13" viewBox="0 0 8 13"><path d="M0.6 0.6l5.9 5.9l-5.9 5.9" stroke="#333" stroke-width="1" fill="none"/></svg><svg style="left:596px;top:501.0px" width="8" height="13" viewBox="0 0 8 13"><path d="M0.6 0.6l5.9 5.9l-5.9 5.9" stroke="#333" stroke-width="1" fill="none"/></svg>
<svg style="left:335px;top:281px" width="15" height="16" viewBox="0 0 15 16"><path d="M3.6 7v-2.6a3.9 3.9 0 0 1 7.8 0v2.6" stroke="#2b7bd6" stroke-width="1.9" fill="none"/><rect x="0.5" y="6.3" width="14" height="9.4" rx="2" fill="#2b7bd6"/><circle cx="9.8" cy="8.8" r="1.2" fill="#fff"/><circle cx="9.8" cy="13.2" r="1.2" fill="#fff"/><circle cx="5.2" cy="11" r="1.2" fill="#fff"/><path d="M9.8 8.8L5.2 11l4.6 2.2" stroke="#fff" stroke-width="0.9" fill="none"/></svg>
<svg style="left:334px;top:398px" width="16" height="16" viewBox="0 0 16 16"><defs><linearGradient id="mcg" x1="0" y1="0" x2="1" y2="0"><stop offset="0" stop-color="#c4121d"/><stop offset="1" stop-color="#7d0a12"/></linearGradient></defs><rect x="0" y="0" width="16" height="16.3" fill="url(#mcg)"/><path d="M2.6 2.8l5.400 2.700l5.400-2.700v8.300l-5.400 3.100l-5.400-3.100z" fill="#fff"/><path d="M5 6.600l3 1.500l3-1.500v3.500l-3 1.700l-3-1.700z" fill="#a00e18"/></svg>
<svg style="left:333px;top:427px" width="16" height="15" viewBox="0 0 16 15"><path d="M5.5 3.5h-4.5v10.5h11v-3" stroke="#333" stroke-width="1" fill="none"/><path d="M9.5 0.8l5.2 4.4l-5.2 4.4v-2.6c-3 0-4.6 1-5.7 3.2c0.3-3.7 2.2-6.3 5.7-6.6z" stroke="#333" stroke-width="1" fill="none" stroke-linejoin="round"/></svg>
<span class="t" id="t68" style="left:358.4px;top:237px;color:#1a1a1a;font-size:12px;font-weight:bold;letter-spacing:-0.153px;">Ouvrir</span>
<span class="t" id="t69" style="left:358.4px;top:259px;color:#1a1a1a;font-size:12px;letter-spacing:-0.091px;">Ouvrir dans une nouvelle fenêtre</span>
<span class="t" id="t70" style="left:358.4px;top:281px;color:#1a1a1a;font-size:12px;letter-spacing:-0.224px;">Classer et protéger</span>
<span class="t" id="t71" style="left:358.4px;top:310px;color:#1a1a1a;font-size:12px;letter-spacing:-0.231px;">Extraire tout...</span>
<span class="t" id="t72" style="left:358.4px;top:332px;color:#1a1a1a;font-size:12px;letter-spacing:0.031px;">7-Zip</span>
<span class="t" id="t73" style="left:358.4px;top:354px;color:#1a1a1a;font-size:11.65px;letter-spacing:-0.556px;">CRC SHA</span>
<span class="t" id="t74" style="left:358.4px;top:376px;color:#1a1a1a;font-size:12px;letter-spacing:-0.164px;">Épingler à l&#x27;écran de démarrage</span>
<span class="t" id="t75" style="left:358.4px;top:398px;color:#1a1a1a;font-size:12px;letter-spacing:-0.329px;">Rechercher les menaces</span>
<span class="t" id="t76" style="left:358.4px;top:427px;color:#1a1a1a;font-size:12px;letter-spacing:-0.316px;">Partager</span>
<span class="t" id="t77" style="left:358.4px;top:449px;color:#1a1a1a;font-size:12px;letter-spacing:-0.169px;">Ouvrir avec...</span>
<span class="t" id="t78" style="left:358.4px;top:471px;color:#1a1a1a;font-size:12px;letter-spacing:-0.302px;">Restaurer les versions précédentes</span>
<span class="t" id="t79" style="left:358.4px;top:500px;color:#1a1a1a;font-size:12px;letter-spacing:-0.378px;">Envoyer vers</span>
<span class="t" id="t80" style="left:358.4px;top:529px;color:#1a1a1a;font-size:12px;letter-spacing:-0.143px;">Couper</span>
<span class="t" id="t81" style="left:358.4px;top:551px;color:#1a1a1a;font-size:12px;letter-spacing:-0.143px;">Copier</span>
<span class="t" id="t82" style="left:358.4px;top:580px;color:#1a1a1a;font-size:12px;letter-spacing:-0.122px;">Créer un raccourci</span>
<span class="t" id="t83" style="left:358.4px;top:602px;color:#1a1a1a;font-size:12px;letter-spacing:-0.095px;">Supprimer</span>
<span class="t" id="t84" style="left:358.4px;top:624px;color:#1a1a1a;font-size:12px;letter-spacing:-0.107px;">Renommer</span>
<span class="t" id="t85" style="left:358.4px;top:653px;color:#1a1a1a;font-size:12px;letter-spacing:-0.220px;">Propriétés</span>

<!-- submenu -->
<div class="a" style="left:609px;top:326px;width:437px;height:274px;background:#f2f2f2;border:1px solid #a0a0a0;box-sizing:border-box;box-shadow:3px 4px 2px -1px rgba(0,0,0,.55);"></div>
<div class="hl" style="left:612px;top:397px;width:431px;height:22px;"></div>
<svg style="left:1027px;top:357.0px" width="8" height="13" viewBox="0 0 8 13"><path d="M0.6 0.6l5.9 5.9l-5.9 5.9" stroke="#333" stroke-width="1" fill="none"/></svg>
<span class="t" id="t86" style="left:644.7px;top:334px;color:#1a1a1a;font-size:12px;letter-spacing:-0.099px;">Ouvrir archive</span>
<span class="t" id="t87" style="left:644.7px;top:356px;color:#1a1a1a;font-size:12px;letter-spacing:-0.099px;">Ouvrir archive</span>
<span class="t" id="t88" style="left:644.7px;top:378px;color:#1a1a1a;font-size:12px;letter-spacing:-0.316px;">Extraire les fichiers...</span>
<span class="t" id="t89" style="left:644.7px;top:400px;color:#1a1a1a;font-size:12px;letter-spacing:-0.349px;">Extraire Ici</span>
<span class="t" id="t90" style="left:644.7px;top:422px;color:#1a1a1a;font-size:12px;letter-spacing:-0.125px;">Extraire vers &quot;original_email\&quot;</span>
<span class="t" id="t91" style="left:644.7px;top:444px;color:#1a1a1a;font-size:12px;letter-spacing:-0.001px;">Contrôler l&#x27;archive</span>
<span class="t" id="t92" style="left:644.7px;top:466px;color:#1a1a1a;font-size:12px;letter-spacing:-0.078px;">Ajouter à l&#x27;archive...</span>
<span class="t" id="t93" style="left:644.7px;top:488px;color:#1a1a1a;font-size:12px;letter-spacing:-0.151px;">Compresser et envoyer par courriel...</span>
<span class="t" id="t94" style="left:644.7px;top:510px;color:#1a1a1a;font-size:12px;letter-spacing:-0.138px;">Ajouter à &quot;original_email_2.7z&quot;</span>
<span class="t" id="t95" style="left:644.7px;top:532px;color:#1a1a1a;font-size:12px;letter-spacing:-0.161px;">Compresser vers &quot;original_email_2.7z&quot; et envoyer par courriel</span>
<span class="t" id="t96" style="left:644.7px;top:554px;color:#1a1a1a;font-size:12px;letter-spacing:-0.077px;">Ajouter à &quot;original_email_2.zip&quot;</span>
<span class="t" id="t97" style="left:644.7px;top:576px;color:#1a1a1a;font-size:12px;letter-spacing:-0.137px;">Compresser vers &quot;original_email_2.zip&quot; et envoyer par courriel</span>

<!-- bottom crop -->
<div class="a" style="left:0;top:676px;width:1047px;height:76px;background:#fff;"></div>

</body></html>
